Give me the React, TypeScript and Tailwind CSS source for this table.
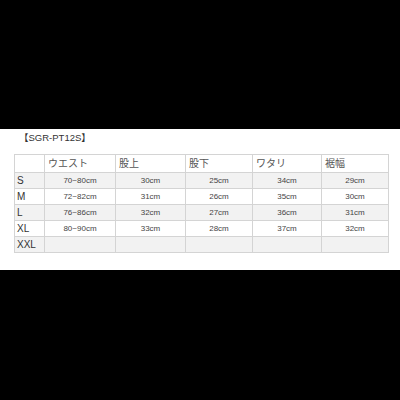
const font = { fontFamily: '"Liberation Sans", "Noto Sans CJK JP", sans-serif' }

const headers = ["ウエスト", "股上", "股下", "ワタリ", "裾幅"]

const rows: { size: string; values: string[] }[] = [
  { size: "S", values: ["70~80cm", "30cm", "25cm", "34cm", "29cm"] },
  { size: "M", values: ["72~82cm", "31cm", "26cm", "35cm", "30cm"] },
  { size: "L", values: ["76~86cm", "32cm", "27cm", "36cm", "31cm"] },
  { size: "XL", values: ["80~90cm", "33cm", "28cm", "37cm", "32cm"] },
  { size: "XXL", values: ["", "", "", "", ""] },
]

const colWidths = ["w-[30px]", "w-[71px]", "w-[70px]", "w-[67px]", "w-[69px]", "w-[67px]"]

export default function App() {
  return (
    <div className="w-[400px] h-[400px] bg-black flex flex-col" style={font}>
      <div className="h-[129px]" />
      <div className="h-[141px] bg-white pt-[2px]">
        <p className="pl-[19px] text-[9.5px] leading-[14px] text-[#333]">【SGR-PT12S】</p>
        <table className="ml-[14px] mt-[9px] border-collapse table-fixed w-[374px]">
          <colgroup>
            {colWidths.map((w, i) => (
              <col key={i} className={w} />
            ))}
          </colgroup>
          <thead>
            <tr className="h-[18px] bg-white">
              <th className="border border-[#d4d4d4]" />
              {headers.map((h) => (
                <th
                  key={h}
                  className="border border-[#d4d4d4] text-left font-normal text-[10px] text-[#555] pl-[3px] leading-none"
                >
                  {h}
                </th>
              ))}
            </tr>
          </thead>
          <tbody>
            {rows.map((r, i) => (
              <tr key={r.size} className={`h-[16px] ${i % 2 === 0 ? "bg-[#f2f2f2]" : "bg-white"}`}>
                <td className="border border-[#d4d4d4] text-[10px] text-[#333] pl-[2px] leading-none">
                  {r.size}
                </td>
                {r.values.map((v, j) => (
                  <td
                    key={j}
                    className="border border-[#d4d4d4] text-center text-[8px] text-[#444] leading-none"
                  >
                    {v}
                  </td>
                ))}
              </tr>
            ))}
          </tbody>
        </table>
      </div>
      <div className="flex-1" />
    </div>
  )
}
